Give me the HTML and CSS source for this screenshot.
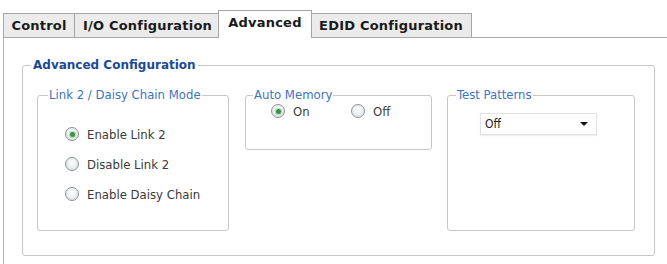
FILE: index.html
```html
<!DOCTYPE html>
<html>
<head>
<meta charset="utf-8">
<title>Advanced</title>
<link rel="stylesheet" href="styles.css">
</head>
<body>
<div class="tabs">
	<div class="tab tab-control">Control</div>
	<div class="tab tab-io">I/O Configuration</div>
	<div class="tab tab-adv active">Advanced</div>
	<div class="tab tab-edid">EDID Configuration</div>
</div>
<div class="panel">
	<fieldset class="group main">
		<legend>Advanced Configuration</legend>
		<div class="row">
			<fieldset class="group link">
				<legend>Link 2 / Daisy Chain Mode</legend>
				<div class="option"><span class="radio on"></span>Enable Link 2</div>
				<div class="option"><span class="radio"></span>Disable Link 2</div>
				<div class="option"><span class="radio"></span>Enable Daisy Chain</div>
			</fieldset>
			<fieldset class="group memory">
				<legend>Auto Memory</legend>
				<div class="inline">
					<div class="option"><span class="radio on"></span>On</div>
					<div class="option"><span class="radio"></span>Off</div>
				</div>
			</fieldset>
			<fieldset class="group pattern">
				<legend>Test Patterns</legend>
				<div class="select">
					<span>Off</span>
					<i class="arrow"></i>
				</div>
			</fieldset>
		</div>
	</fieldset>
</div>
</body>
</html>
```

FILE: styles.css
```css
body{
	margin:0;
	background:#fff;
	font-family:"DejaVu Sans Condensed","Liberation Sans Narrow","Liberation Sans",sans-serif;
	font-size:13px;
	color:#3a3a3a;
	overflow:hidden;
}
/* tabs */
.tabs{
	display:flex;
	align-items:flex-end;
	height:37px;
	padding-left:3px;
	box-sizing:border-box;
}
.tab{
	height:24px;
	line-height:23px;
	box-sizing:border-box;
	font-family:"DejaVu Sans",sans-serif;
	font-weight:bold;
	font-size:13px;
	letter-spacing:0.2px;
	color:#1a1a1a;
	background:#ebebeb;
	border:1px solid #a6a6a6;
	border-bottom:none;
	text-align:center;
	margin-right:-1px;
}
.tab-control{ width:72px; }
.tab-io{ width:147px; }
.tab-edid{ width:162px; }
.tab.active{
	width:94px;
	height:28px;
	line-height:24px;
	background:#fff;
	margin:0 -2px -1px -2px;
	z-index:1;
}
/* panel */
.panel{
	border-top:1px solid #a8a8a8;
	border-left:1px solid #b4b4b4;
	margin-left:3px;
	height:240px;
	padding:20px 0 0 18px;
	box-sizing:border-box;
}
.group{
	margin:0;
	border:1px solid #c6c6c6;
	border-radius:3px;
	min-width:0;
}
.group>legend{
	padding:0 1px;
	line-height:16px;
	color:#3d73bc;
}
.main{
	width:633px;
	box-sizing:border-box;
	padding:15px 0 24px 14px;
}
.main>legend{
	font-family:"DejaVu Sans",sans-serif;
	font-weight:bold;
	font-size:12px;
	line-height:14px;
	color:#1c4a94;
	padding:0 2px;
	margin-left:-6px;
}
.row{
	display:flex;
	align-items:stretch;
}
.link{
	width:192px;
	box-sizing:border-box;
	padding:16px 0 21px 27px;
}
.link>legend{ margin-left:-17px; }
.memory{
	width:187px;
	box-sizing:border-box;
	margin-left:16px;
	align-self:flex-start;
	padding:0 0 30px 25px;
}
.memory>legend{ margin-left:-18px; }
.pattern{
	width:188px;
	box-sizing:border-box;
	margin-left:15px;
	padding:10px 0 0 32px;
}
.pattern>legend{ margin-left:-24px; }
/* radios */
.option{
	display:flex;
	align-items:center;
	height:30px;
}
.radio{
	width:14px;
	height:14px;
	box-sizing:border-box;
	border-radius:50%;
	border:1px solid #8c9396;
	background:radial-gradient(circle at 50% 40%,#fff 0,#e9ecee 55%,#cdd2d6 100%);
	margin-right:8px;
	display:flex;
	align-items:center;
	justify-content:center;
}
.radio.on::after{
	content:"";
	width:5px;
	height:5px;
	border-radius:50%;
	background:#3f9048;
	box-shadow:0 0 0 1px #b1dcb4;
}
.inline{
	display:flex;
}
.inline .option{
	width:87px;
	height:16px;
}
/* select */
.select{
	width:117px;
	height:22px;
	box-sizing:border-box;
	border:1px solid #e2e2e2;
	box-shadow:0 1px 1px #eee;
	display:flex;
	align-items:center;
	justify-content:space-between;
	padding:0 8px 0 4px;
	font-size:12px;
	color:#222;
}
.arrow{
	width:0;
	height:0;
	border-left:4px solid transparent;
	border-right:4px solid transparent;
	border-top:4px solid #111;
}
```
